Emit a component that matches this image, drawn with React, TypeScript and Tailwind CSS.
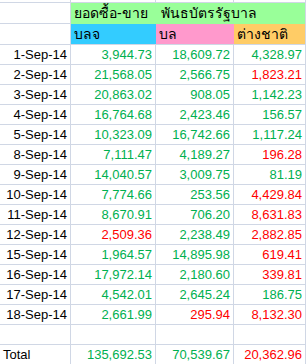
type Tone = "g" | "r";

interface Row {
  date: string;
  vals: [string, Tone][];
}

const rows: Row[] = [
  { date: "1-Sep-14", vals: [["3,944.73", "g"], ["18,609.72", "g"], ["4,328.97", "g"]] },
  { date: "2-Sep-14", vals: [["21,568.05", "g"], ["2,566.75", "g"], ["1,823.21", "r"]] },
  { date: "3-Sep-14", vals: [["20,863.02", "g"], ["908.05", "g"], ["1,142.23", "g"]] },
  { date: "4-Sep-14", vals: [["16,764.68", "g"], ["2,423.46", "g"], ["156.57", "g"]] },
  { date: "5-Sep-14", vals: [["10,323.09", "g"], ["16,742.66", "g"], ["1,117.24", "g"]] },
  { date: "8-Sep-14", vals: [["7,111.47", "g"], ["4,189.27", "g"], ["196.28", "r"]] },
  { date: "9-Sep-14", vals: [["14,040.57", "g"], ["3,009.75", "g"], ["81.19", "g"]] },
  { date: "10-Sep-14", vals: [["7,774.66", "g"], ["253.56", "g"], ["4,429.84", "r"]] },
  { date: "11-Sep-14", vals: [["8,670.91", "g"], ["706.20", "g"], ["8,631.83", "r"]] },
  { date: "12-Sep-14", vals: [["2,509.36", "r"], ["2,238.49", "g"], ["2,882.85", "r"]] },
  { date: "15-Sep-14", vals: [["1,964.57", "g"], ["14,895.98", "g"], ["619.41", "r"]] },
  { date: "16-Sep-14", vals: [["17,972.14", "g"], ["2,180.60", "g"], ["339.81", "r"]] },
  { date: "17-Sep-14", vals: [["4,542.01", "g"], ["2,645.24", "g"], ["186.75", "g"]] },
  { date: "18-Sep-14", vals: [["2,661.99", "g"], ["295.94", "r"], ["8,132.30", "r"]] },
];

const total: [string, Tone][] = [["135,692.53", "g"], ["70,539.67", "g"], ["20,362.96", "r"]];

const cell = "border-r border-b border-[#d0d7e5] h-5 flex items-center px-[3px] whitespace-nowrap";

const Num = ({ v, tone }: { v: string; tone: Tone }) => (
  <div className={`${cell} justify-end ${tone === "r" ? "text-[#ff0000]" : "text-[#00b050]"}`}>{v}</div>
);

export default function App() {
  return (
    <div
      className="w-[306px] h-[364px] overflow-hidden bg-white text-[13px] text-black"
      style={{ fontFamily: '"Liberation Sans", "Noto Sans", sans-serif' }}
    >
      <div className="grid grid-cols-[71px_85px_78px_72px]">
        {/* partial row above */}
        <div className="h-[3px] border-r border-b border-[#d0d7e5]" />
        <div className="h-[3px] border-r border-b border-[#d0d7e5]" />
        <div className="h-[3px] border-r border-b border-[#d0d7e5]" />
        <div className="h-[3px] border-r border-b border-[#d0d7e5]" />

        {/* green header */}
        <div className="h-[21px] border-r border-b border-[#d0d7e5]" />
        <div className="col-span-3 h-[21px] bg-[#99ff99] flex items-center text-[14px] border-r border-[#d0d7e5]">
          <span className="w-[85px] pl-[3px]">ยอดซื้อ-ขาย</span>
          <span className="pl-[5px]">พันธบัตรรัฐบาล</span>
        </div>

        {/* sub header */}
        <div className="h-[21px] border-r border-b border-[#d0d7e5]" />
        <div className="h-[21px] bg-[#33ccff] border-b border-[#d0d7e5] flex items-center pl-[3px] text-[14px]">บลจ</div>
        <div className="h-[21px] bg-[#ff99cc] border-b border-[#d0d7e5] flex items-center pl-[3px] text-[14px]">บล</div>
        <div className="h-[21px] bg-[#ffcc66] border-r border-b border-[#d0d7e5] flex items-center pl-[3px] text-[14px]">ต่างชาติ</div>

        {rows.map((r) => (
          <div key={r.date} className="contents">
            <div className={`${cell} justify-end`}>{r.date}</div>
            {r.vals.map(([v, t], i) => (
              <Num key={i} v={v} tone={t} />
            ))}
          </div>
        ))}

        <div className={cell} />
        <div className={cell} />
        <div className={cell} />
        <div className={cell} />

        <div className={cell}>Total</div>
        {total.map(([v, t], i) => (
          <Num key={i} v={v} tone={t} />
        ))}
      </div>
    </div>
  );
}
